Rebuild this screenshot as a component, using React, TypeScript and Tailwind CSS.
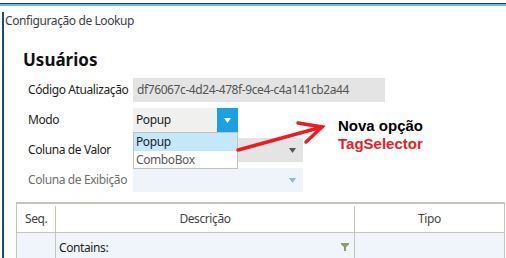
import { useState } from 'react';

interface FieldRowProps {
  label: string;
  disabled?: boolean;
  children: React.ReactNode;
}

function FieldRow({ label, disabled, children }: FieldRowProps) {
  return (
    <div className="flex items-center h-[24px] shrink-0">
      <div
        className={`w-[105px] shrink-0 whitespace-nowrap ${disabled ? 'text-[#6e6e6e]' : 'text-[#1e1e1e]'}`}
      >
        {label}
      </div>
      {children}
    </div>
  );
}

function Caret({ color }: { color: string }) {
  return (
    <svg width="7" height="5" viewBox="0 0 7 5">
      <path d="M0 0 L7 0 L3.5 5 Z" fill={color} />
    </svg>
  );
}

export default function App() {
  const [modo] = useState('Popup');

  return (
    <div className="relative w-[506px] h-[258px] overflow-hidden bg-white font-['Noto_Sans',sans-serif] text-[12px] tracking-[-0.4px]">
      {/* window top edge */}
      <div className="mt-[3px] h-px bg-[#22364c]" />
      <div className="h-[2px] bg-[#5cc4f4]" />

      <div className="flex h-[252px]">
        <div className="ml-[2px] mt-[6px] w-[2px] bg-[#1f4c74]" />

        <div className="flex-1 flex flex-col">
          <div className="pl-px pt-[7px] leading-[16px] text-[#3d3d48]">
            Configuração de Lookup
          </div>

          <div className="pl-[19px] mt-[20px] text-[17px] leading-[22px] font-bold text-[#111] tracking-normal">
            Usuários
          </div>

          <div className="pl-[24px] mt-[7px] flex flex-col gap-[6px]">
            <FieldRow label="Código Atualização">
              <div className="w-[252px] h-[24px] bg-[#e4e4e4] pl-[4px] flex items-center text-[#555]">
                df76067c-4d24-478f-9ce4-c4a141cb2a44
              </div>
            </FieldRow>

            <FieldRow label="Modo">
              <div className="w-[105px] h-[24px] bg-[#f0f0ee] flex">
                <div className="flex-1 pl-[3px] flex items-center text-[#1a1a24]">
                  {modo}
                </div>
                <div className="w-[21px] bg-[#1ba1e2] flex items-center justify-center">
                  <Caret color="#ffffff" />
                </div>
              </div>
            </FieldRow>

            <FieldRow label="Coluna de Valor">
              <div className="w-[170px] h-[24px] bg-[#e4e4e4] flex items-center justify-end pr-[7px]">
                <Caret color="#555555" />
              </div>
            </FieldRow>

            <FieldRow label="Coluna de Exibição" disabled>
              <div className="w-[170px] h-[24px] bg-[#eef4fa] flex items-center justify-end pr-[7px]">
                <Caret color="#8fb8da" />
              </div>
            </FieldRow>
          </div>

          {/* grid */}
          <div className="ml-[12px] mt-[10px] w-[489px] border-t-2 border-r border-l border-[#c6c6b6]">
            <div className="flex h-[29px] border-b border-[#c6c6b6] text-[#444] pt-[2px]">
              <div className="w-[39px] border-r border-[#c6c6b6] pl-[8px] flex items-center">Seq.</div>
              <div className="w-[299px] border-r border-[#c6c6b6] flex items-center justify-center">Descrição</div>
              <div className="flex-1 flex items-center justify-center">Tipo</div>
            </div>
            <div className="flex h-[30px] bg-[#eff5fb] text-[#1e1e1e]">
              <div className="w-[39px] border-r border-[#c6c6b6]" />
              <div className="w-[299px] border-r border-[#c6c6b6] pl-[3px] pr-[5px] pt-[6px] flex justify-between">
                <span>Contains:</span>
                <svg width="8" height="8" viewBox="0 0 8 8" className="mt-[4px]">
                  <path d="M0 0 H8 V1.5 L5 4 V8 H3 V4 L0 1.5 Z" fill="#8c9a6c" />
                </svg>
              </div>
              <div className="flex-1" />
            </div>
          </div>
        </div>
      </div>

      {/* open dropdown list */}
      <div className="absolute left-[133px] top-[132px] w-[105px] h-[37px] bg-white border border-[#c2c2b6]">
        <div className="h-[18px] bg-[#c4e7fa] pl-[2px] flex items-center text-[#1a1a2a]">Popup</div>
        <div className="h-[17px] pl-[2px] flex items-center text-[#5a5a5a]">ComboBox</div>
      </div>

      {/* annotation */}
      <svg className="absolute left-0 top-0" width="506" height="258" viewBox="0 0 506 258">
        <g stroke="#ed1c24" strokeWidth="3.5" strokeLinecap="round" fill="none">
          <path d="M238 150 L322 127" />
          <path d="M298 123 L322 127 L306 142" strokeLinejoin="miter" />
        </g>
      </svg>
      <div className="absolute left-[338px] top-[117px] font-['Liberation_Sans',Arial,sans-serif] font-bold text-[15px] leading-[18px] tracking-normal">
        <div className="text-black">Nova opção</div>
        <div className="text-[#ed1c24]">TagSelector</div>
      </div>
    </div>
  );
}
